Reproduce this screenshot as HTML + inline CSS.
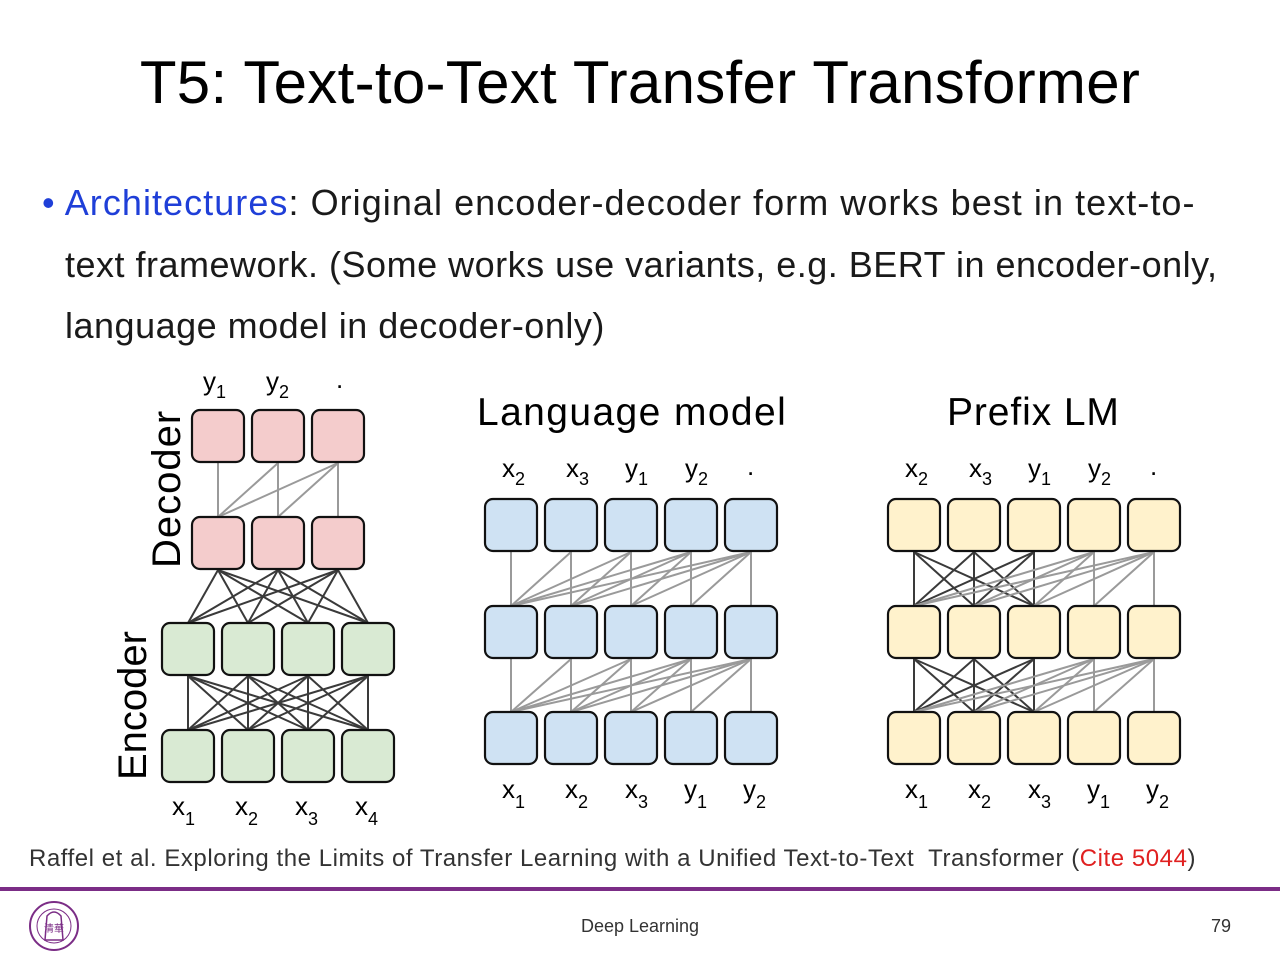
<!DOCTYPE html>
<html><head><meta charset="utf-8"><style>
body{margin:0;width:1280px;height:960px;background:#fff;position:relative;overflow:hidden;font-family:"Liberation Sans",sans-serif;}
.t{position:absolute;white-space:nowrap;}
</style></head><body>
<div class="t" style="left:0;width:1280px;text-align:center;top:48px;font-size:60px;color:#000;letter-spacing:0.3px">T5: Text-to-Text Transfer Transformer</div>
<div class="t" style="left:42px;top:172px;font-size:36px;color:#1a1a1a;line-height:61.5px;letter-spacing:0.5px">
<span style="letter-spacing:1.05px"><span style="color:#1f3fd8">•</span> <span style="color:#1f3fd8">Architectures</span>: Original encoder-decoder form works best in text-to-</span><br>
<span style="padding-left:23px">text framework. (Some works use variants, e.g. BERT in encoder-only,</span><br>
<span style="padding-left:23px">language model in decoder-only)</span></div>
<svg id="d" width="1280" height="960" style="position:absolute;left:0;top:0" font-family="Liberation Sans, sans-serif">
<g id="lines"></g><g id="boxes"></g>
<g font-size="26" fill="#000">
<text x="203" y="390">y<tspan font-size="18" dy="8">1</tspan></text>
<text x="266" y="390">y<tspan font-size="18" dy="8">2</tspan></text>
<text x="336" y="388">.</text>
<text x="172" y="815">x<tspan font-size="18" dy="10">1</tspan></text>
<text x="235" y="815">x<tspan font-size="18" dy="10">2</tspan></text>
<text x="295" y="815">x<tspan font-size="18" dy="10">3</tspan></text>
<text x="355" y="815">x<tspan font-size="18" dy="10">4</tspan></text>
<text x="0" y="0" transform="translate(180,568) rotate(-90)" font-size="40" letter-spacing="1">Decoder</text>
<text x="0" y="0" transform="translate(146,780) rotate(-90)" font-size="40">Encoder</text>
<text x="477" y="425" font-size="39" letter-spacing="1.4">Language model</text>
<text x="947" y="425" font-size="39" letter-spacing="0.9">Prefix LM</text>
<text x="502" y="477">x<tspan font-size="18" dy="8">2</tspan></text>
<text x="566" y="477">x<tspan font-size="18" dy="8">3</tspan></text>
<text x="625" y="477">y<tspan font-size="18" dy="8">1</tspan></text>
<text x="685" y="477">y<tspan font-size="18" dy="8">2</tspan></text>
<text x="747" y="475">.</text>
<text x="502" y="798">x<tspan font-size="18" dy="10">1</tspan></text>
<text x="565" y="798">x<tspan font-size="18" dy="10">2</tspan></text>
<text x="625" y="798">x<tspan font-size="18" dy="10">3</tspan></text>
<text x="684" y="798">y<tspan font-size="18" dy="10">1</tspan></text>
<text x="743" y="798">y<tspan font-size="18" dy="10">2</tspan></text>
<text x="905" y="477">x<tspan font-size="18" dy="8">2</tspan></text>
<text x="969" y="477">x<tspan font-size="18" dy="8">3</tspan></text>
<text x="1028" y="477">y<tspan font-size="18" dy="8">1</tspan></text>
<text x="1088" y="477">y<tspan font-size="18" dy="8">2</tspan></text>
<text x="1150" y="475">.</text>
<text x="905" y="798">x<tspan font-size="18" dy="10">1</tspan></text>
<text x="968" y="798">x<tspan font-size="18" dy="10">2</tspan></text>
<text x="1028" y="798">x<tspan font-size="18" dy="10">3</tspan></text>
<text x="1087" y="798">y<tspan font-size="18" dy="10">1</tspan></text>
<text x="1146" y="798">y<tspan font-size="18" dy="10">2</tspan></text>
</g>
</svg>
<div class="t" style="left:29px;top:845px;font-size:24px;color:#333;letter-spacing:0.55px">Raffel et al. Exploring the Limits of Transfer Learning with a Unified Text-to-Text&nbsp; Transformer (<span style="color:#e02020">Cite 5044</span>)</div>
<div style="position:absolute;left:0;top:887px;width:1280px;height:4px;background:#7b2d86"></div>
<svg style="position:absolute;left:28px;top:900px" width="52" height="52"><circle cx="26" cy="26" r="24" fill="none" stroke="#7b2d86" stroke-width="2"/><circle cx="26" cy="26" r="17" fill="none" stroke="#7b2d86" stroke-width="1"/><path d="M17 40 L19 16 Q26 8 33 16 L35 40 Z" fill="none" stroke="#7b2d86" stroke-width="1.5"/><text x="26" y="32" font-size="10" fill="#7b2d86" text-anchor="middle" font-family="Noto Sans CJK SC, sans-serif">清華</text></svg>
<div class="t" style="left:0;width:1280px;text-align:center;top:916px;font-size:18px;color:#333">Deep Learning</div>
<div class="t" style="left:1211px;top:916px;font-size:18px;color:#333">79</div>
<script>
var L=document.getElementById('lines'),B=document.getElementById('boxes'),ns='http://www.w3.org/2000/svg';
function ln(x1,y1,x2,y2,c){var e=document.createElementNS(ns,'line');e.setAttribute('x1',x1);e.setAttribute('y1',y1);e.setAttribute('x2',x2);e.setAttribute('y2',y2);e.setAttribute('stroke',c);e.setAttribute('stroke-width',2);L.appendChild(e);}
function bx(x,y,f){var e=document.createElementNS(ns,'rect');e.setAttribute('x',x);e.setAttribute('y',y);e.setAttribute('width',52);e.setAttribute('height',52);e.setAttribute('rx',8);e.setAttribute('fill',f);e.setAttribute('stroke','#111');e.setAttribute('stroke-width',2.2);B.appendChild(e);}
var D='#3a3a3a',G='#9a9a9a';
var dx=[192,252,312];
dx.forEach(function(x){bx(x,410,'#f4cccc');bx(x,517,'#f4cccc');});
for(var i=0;i<3;i++)for(var j=0;j<=i;j++)ln(dx[j]+26,517,dx[i]+26,463,G);
var ex=[162,222,282,342];
ex.forEach(function(x){bx(x,623,'#d9ead3');bx(x,730,'#d9ead3');});
for(var i=0;i<4;i++){for(var j=0;j<3;j++)ln(ex[i]+26,623,dx[j]+26,570,D);for(var j=0;j<4;j++)ln(ex[j]+26,730,ex[i]+26,676,D);}
function grid(x0,f,pre){var xs=[];for(var k=0;k<5;k++)xs.push(x0+60*k);
 [499,606,712].forEach(function(y){xs.forEach(function(x){bx(x,y,f);});});
 [[606,552],[712,659]].forEach(function(r){for(var i=0;i<5;i++)for(var j=0;j<5;j++){
  if(i<pre&&j<pre)ln(xs[j]+26,r[0],xs[i]+26,r[1],D);else if(j<=i)ln(xs[j]+26,r[0],xs[i]+26,r[1],G);}});}
grid(485,'#cfe2f3',0);grid(888,'#fff2cc',3);
</script>
</body></html>
